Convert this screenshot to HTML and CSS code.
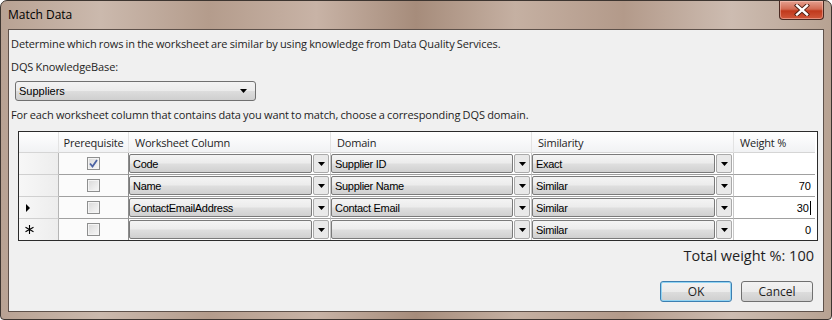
FILE: index.html
```html
<!DOCTYPE html>
<html lang="en">
<head>
    <meta charset="UTF-8">
    <title>Match Data</title>
    <link rel="stylesheet" href="styles.css">
</head>
<body>
    <div class="window">
        <div class="titlebar">
            <span class="title">Match Data</span>
            <button class="close" aria-label="Close">
                <svg width="16" height="12" viewBox="0 0 16 12">
                    <path d="M3 1.5 L13 10.5 M13 1.5 L3 10.5" stroke="#4a1c10" stroke-width="4.2" stroke-linecap="square"/>
                    <path d="M3 1.5 L13 10.5 M13 1.5 L3 10.5" stroke="#ffffff" stroke-width="2.4" stroke-linecap="square"/>
                </svg>
            </button>
        </div>

        <div class="client">
            <p class="intro">Determine which rows in the worksheet are similar by using knowledge from Data Quality Services.</p>
            <p class="label">DQS KnowledgeBase:</p>
            <div class="select">
                <span>Suppliers</span>
                <svg class="arrow" width="7" height="4" viewBox="0 0 7 4"><path d="M0 0 H7 L3.5 4 Z" fill="#000"/></svg>
            </div>
            <p class="hint">For each worksheet column that contains data you want to match, choose a corresponding DQS domain.</p>

            <div class="grid">
                <div class="row head">
                    <div class="cell rowhead"></div>
                    <div class="cell center">Prerequisite</div>
                    <div class="cell">Worksheet Column</div>
                    <div class="cell">Domain</div>
                    <div class="cell">Similarity</div>
                    <div class="cell">Weight %</div>
                </div>

                <div class="row">
                    <div class="cell rowhead"></div>
                    <div class="cell check-cell"><span class="check on"><svg width="9" height="9" viewBox="0 0 9 9"><path d="M1 4.5 L3.5 7.5 L8 1" fill="none" stroke="#4b62a3" stroke-width="1.8"/></svg></span></div>
                    <div class="cell combo-cell"><div class="combo"><span class="value">Code</span><span class="drop"></span></div></div>
                    <div class="cell combo-cell"><div class="combo"><span class="value">Supplier ID</span><span class="drop"></span></div></div>
                    <div class="cell combo-cell"><div class="combo"><span class="value">Exact</span><span class="drop"></span></div></div>
                    <div class="cell weight"></div>
                </div>

                <div class="row">
                    <div class="cell rowhead"></div>
                    <div class="cell check-cell"><span class="check"></span></div>
                    <div class="cell combo-cell"><div class="combo"><span class="value">Name</span><span class="drop"></span></div></div>
                    <div class="cell combo-cell"><div class="combo"><span class="value">Supplier Name</span><span class="drop"></span></div></div>
                    <div class="cell combo-cell"><div class="combo"><span class="value">Similar</span><span class="drop"></span></div></div>
                    <div class="cell weight">70</div>
                </div>

                <div class="row">
                    <div class="cell rowhead"><span class="current"></span></div>
                    <div class="cell check-cell"><span class="check"></span></div>
                    <div class="cell combo-cell"><div class="combo"><span class="value">ContactEmailAddress</span><span class="drop"></span></div></div>
                    <div class="cell combo-cell"><div class="combo"><span class="value">Contact Email</span><span class="drop"></span></div></div>
                    <div class="cell combo-cell"><div class="combo"><span class="value">Similar</span><span class="drop"></span></div></div>
                    <div class="cell weight">30<span class="caret"></span></div>
                </div>

                <div class="row last">
                    <div class="cell rowhead">
                        <svg class="newrow" width="9" height="9" viewBox="0 0 9 9">
                            <path d="M4.5 0 V9 M0.5 2.2 L8.5 6.8 M8.5 2.2 L0.5 6.8" stroke="#000" stroke-width="1.1"/>
                        </svg>
                    </div>
                    <div class="cell check-cell"><span class="check"></span></div>
                    <div class="cell combo-cell"><div class="combo"><span class="value"></span><span class="drop"></span></div></div>
                    <div class="cell combo-cell"><div class="combo"><span class="value"></span><span class="drop"></span></div></div>
                    <div class="cell combo-cell"><div class="combo"><span class="value">Similar</span><span class="drop"></span></div></div>
                    <div class="cell weight">0</div>
                </div>
            </div>

            <div class="total">Total weight %: 100</div>

            <div class="buttons">
                <button class="btn default">OK</button>
                <button class="btn">Cancel</button>
            </div>
        </div>
    </div>
</body>
</html>
```

FILE: styles.css
```css
body {
    margin: 0;
    width: 832px;
    height: 320px;
    overflow: hidden;
    background-color: #ffffff;
    font-family: "Open Sans", "Noto Sans", sans-serif;
}
.window {
    box-sizing: border-box;
    height: 320px;
    padding: 0 7px 8px 7px;
    border: 1px solid #3d3530;
    border-radius: 7px 7px 4px 4px;
    background: linear-gradient(90deg, #b8a293 0%, #cbb9ad 12%, #b49c8c 25%, #c8b3a6 38%, #a68c7b 50%, #c5b0a2 62%, #b39a8a 75%, #cdbcb1 88%, #b7a292 100%);
}
.titlebar {
    display: flex;
    align-items: flex-start;
    height: 28px;
}
.title {
    margin: 6px 0 0 0;
    font-size: 12px;
    line-height: 16px;
    color: #000;
}
.close {
    display: flex;
    align-items: center;
    justify-content: center;
    margin-left: auto;
    margin-right: 0;
    width: 45px;
    height: 19px;
    padding: 0;
    border: 1px solid #4b2a22;
    border-top: none;
    border-radius: 0 0 4px 4px;
    background: linear-gradient(#e5a08f 0%, #d26a52 45%, #c1391c 55%, #d0583b 100%);
    box-shadow: inset 0 0 0 1px rgba(255, 210, 200, 0.45);
}
.client {
    box-sizing: border-box;
    height: 283px;
    padding: 0 9px 0 2px;
    border: 1px solid #5e514a;
    background-color: #f0f0f0;
    font-size: 12px;
    color: #1e1e1e;
}
.intro, .label, .hint {
    margin: 0;
    font-size: 11px;
    line-height: 16px;
    letter-spacing: -0.1px;
    word-spacing: -0.5px;
    white-space: nowrap;
}
.intro {
    margin-top: 6px;
}
.label {
    margin-top: 7px;
}
.hint {
    margin-top: 6px;
}
.select {
    box-sizing: border-box;
    display: flex;
    align-items: center;
    width: 241px;
    height: 20px;
    margin: 6px 0 0 4px;
    padding: 0 8px 0 3px;
    border: 1px solid #707070;
    border-radius: 3px;
    background: linear-gradient(#f3f3f3 0%, #ebebeb 50%, #dddddd 51%, #cfcfcf 100%);
    font-family: "Liberation Sans", Arial, sans-serif;
    font-size: 11px;
    color: #000;
}
.select .arrow {
    margin-left: auto;
}
.grid {
    margin: 8px 0 0 7px;
    width: 798px;
    border: 1px solid #2b2b2b;
    background-color: #ffffff;
    font-family: "Liberation Sans", Arial, sans-serif;
    font-size: 11px;
    color: #000;
}
.row {
    display: grid;
    grid-template-columns: 40px 70px 202px 201px 202px 81px;
    height: 22px;
}
.row.last .cell {
    border-bottom: none;
}
.row.last {
    height: 21px;
}
.cell {
    box-sizing: border-box;
    display: flex;
    align-items: center;
    border-right: 1px solid #a0a0a0;
    border-bottom: 1px solid #a0a0a0;
    overflow: hidden;
}
.cell:last-child {
    border-right: none;
}
.head {
    height: 21px;
}
.head .cell {
    padding-left: 6px;
    background: linear-gradient(#ffffff, #f1f2f4);
    border-right-color: #e3e3e3;
    border-bottom-color: #d5d5d5;
    font-family: "Open Sans", "Noto Sans", sans-serif;
    font-size: 11px;
    letter-spacing: -0.2px;
    color: #1e1e1e;
}
.head .cell.center {
    justify-content: center;
    padding-left: 0;
}
.rowhead {
    background: linear-gradient(90deg, #f7f7f7, #ededed);
    border-right-color: #b5b5b5;
    border-bottom-color: #d0d0d0;
}
.current {
    width: 0;
    height: 0;
    margin-left: 7px;
    border-top: 4px solid transparent;
    border-bottom: 4px solid transparent;
    border-left: 4px solid #000;
}
.newrow {
    margin-left: 6px;
}
.check-cell {
    justify-content: center;
    background-color: #fbfbfb;
    border-right-color: #8c8c8c;
}
.check {
    box-sizing: border-box;
    display: flex;
    align-items: center;
    justify-content: center;
    width: 13px;
    height: 13px;
    border: 1px solid #8e8f8f;
    background: linear-gradient(135deg, #d8d8d8, #f8f8f8);
    box-shadow: inset 0 0 0 1px #f4f4f4;
}
.combo-cell {
    padding: 1px 1px 1px 0;
    background-color: #ffffff;
    border-right-color: #c8c8c8;
}
.combo {
    display: flex;
    width: 100%;
    height: 100%;
    gap: 1px;
}
.combo .value {
    box-sizing: border-box;
    flex: 1;
    display: flex;
    align-items: center;
    padding-left: 3px;
    border: 1px solid #7a7a7a;
    border-radius: 2px;
    background: linear-gradient(#f4f4f4 0%, #ececec 45%, #dedede 55%, #d0d0d0 100%);
    letter-spacing: -0.3px;
    white-space: nowrap;
}
.combo .drop {
    box-sizing: border-box;
    width: 16px;
    border: 1px solid #a9a9a9;
    border-radius: 2px;
    background: #e9e9e9 no-repeat center;
    background-image: url("data:image/svg+xml,%3Csvg xmlns='http://www.w3.org/2000/svg' width='7' height='4'%3E%3Cpath d='M0 0H7L3.5 4Z' fill='%23000'/%3E%3C/svg%3E");
}
.weight {
    justify-content: flex-end;
    padding-right: 4px;
    background-color: #ffffff;
}
.caret {
    width: 1px;
    height: 14px;
    margin-left: 1px;
    background-color: #000;
}
.total {
    margin-top: 6px;
    text-align: right;
    font-size: 14.5px;
    line-height: 18px;
    color: #1e1e1e;
}
.buttons {
    display: flex;
    justify-content: flex-end;
    gap: 9px;
    margin-top: 16px;
    padding-right: 1px;
}
.btn {
    width: 72px;
    height: 21px;
    padding: 0;
    border: 1px solid #707070;
    border-radius: 3px;
    background: linear-gradient(#f2f2f2 0%, #ebebeb 50%, #dddddd 51%, #cfcfcf 100%);
    font-family: "Open Sans", "Noto Sans", sans-serif;
    font-size: 12px;
    color: #1e1e1e;
}
.btn.default {
    border-color: #3c7fb1;
    box-shadow: inset 0 0 0 1px #92d4f3;
}
```
